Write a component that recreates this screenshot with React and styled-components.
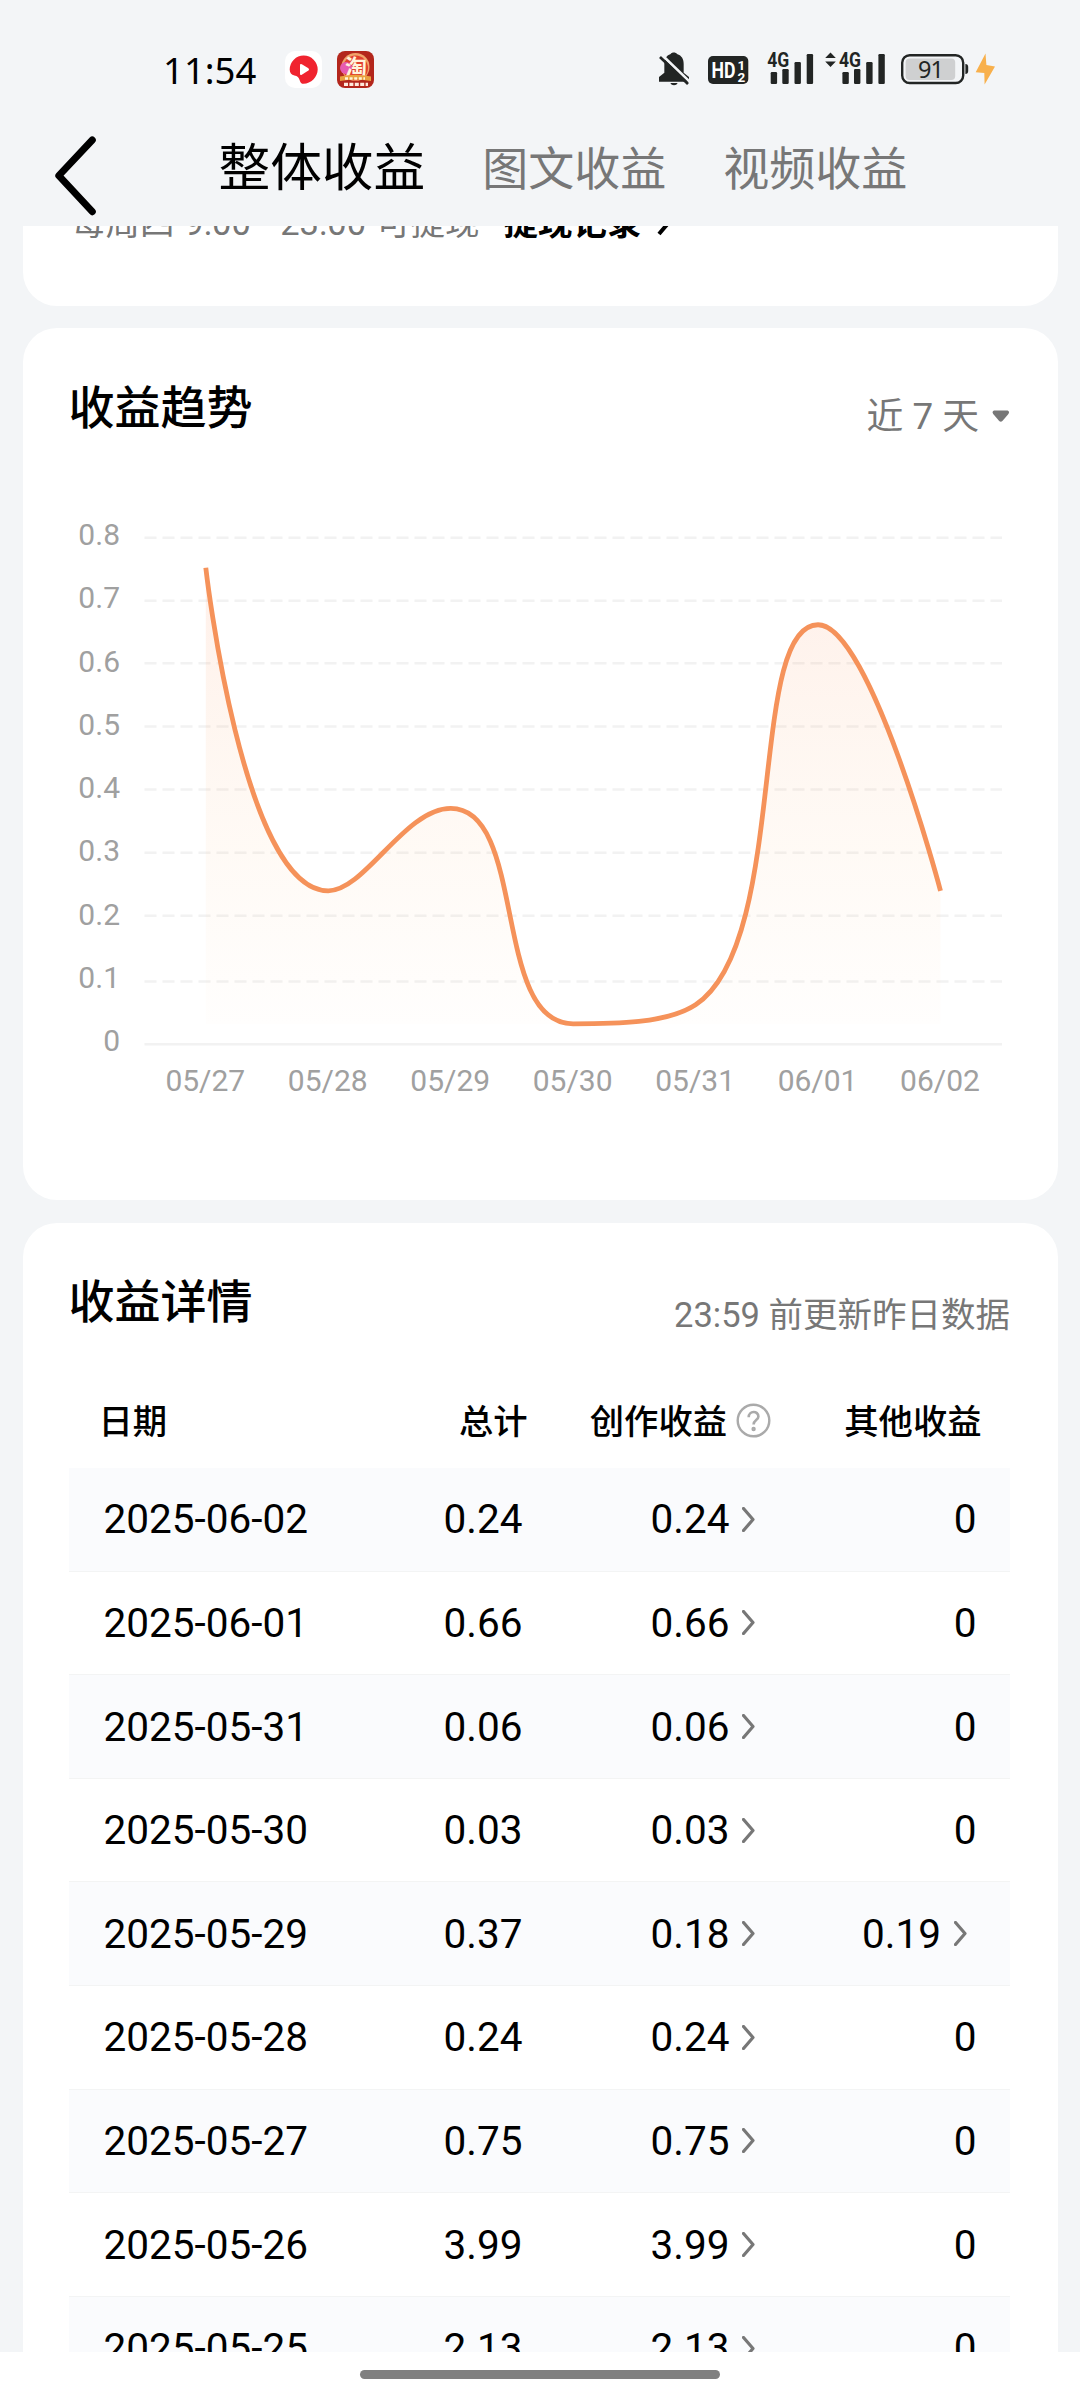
import React from "react";
import styled, { createGlobalStyle } from "styled-components";

const GlobalStyle = createGlobalStyle`
    * {
        box-sizing: border-box;
    }

    body {
        margin: 0;
        background-color: #f3f5f7;
        font-family: Roboto, "Noto Sans CJK SC", sans-serif;
        color: #000;
    }
`;

const Screen = styled.div`
    display: flex;
    flex-direction: column;
    width: 1080px;
    height: 2400px;
    overflow: hidden;
    background-color: #f3f5f7;
`;

//Status bar
const StatusBar = styled.div`
    display: flex;
    justify-content: space-between;
    align-items: center;
    flex: none;
    height: 138px;
    padding: 0 84px 0 163px;
`;

const StatusLeft = styled.div`
    display: flex;
    align-items: center;
`;

const Clock = styled.span`
    width: 122px;
    padding-top: 1px;
    font-family: "Noto Sans", "Open Sans", sans-serif;
    font-size: 36.5px;
    font-weight: 400;
    line-height: 40px;
`;

const AppIcon = styled.svg`
    width: 37px;
    height: 37px;
    margin-right: 15px;
`;

const StatusIcons = styled.svg`
    width: 340px;
    height: 40px;
    overflow: visible;
`;

//Navigation
const NavBar = styled.nav`
    display: flex;
    align-items: center;
    flex: none;
    height: 88px;
    padding-left: 50px;
`;

const BackButton = styled.button`
    display: flex;
    width: 168.5px;
    padding: 0;
    margin-bottom: 13px;
    border: none;
    background: none;
`;

const Tabs = styled.div`
    display: flex;
    align-items: center;
    gap: 57px;
    height: 60px;
    margin-bottom: 27px;
`;

const Tab = styled.span`
    font-size: ${(props) => (props.$active ? "51.7px" : "46px")};
    line-height: 60px;
    color: ${(props) => (props.$active ? "#000" : "#777")};
    white-space: nowrap;
`;

//Cards
const Content = styled.main`
    display: flex;
    flex-direction: column;
    gap: 22.5px;
    flex: 1;
    min-height: 0;
    padding: 0 22.5px;
    overflow: hidden;
`;

const Card = styled.section`
    flex: none;
    height: ${(props) => props.$height};
    padding: 49.5px 47.5px 0 46px;
    border-radius: 34px;
    background-color: #fff;
`;

const WithdrawCard = styled(Card)`
    display: flex;
    align-items: flex-end;
    margin-top: -60px;
    padding-bottom: 60px;
`;

const WithdrawHint = styled.span`
    padding-left: 2.5px;
    font-size: 34.5px;
    line-height: 46px;
    color: #777;
    white-space: pre;
    word-spacing: 1.3px;
`;

const WithdrawLink = styled.a`
    display: flex;
    align-items: center;
    gap: 16px;
    margin-left: 24px;
    font-size: 34.5px;
    font-weight: 600;
    line-height: 46px;
`;

const CardHeader = styled.div`
    display: flex;
    justify-content: space-between;
    align-items: flex-end;
    height: 61.5px;
`;

const Title = styled.h2`
    margin: 0;
    align-self: flex-start;
    font-size: 46px;
    font-weight: 500;
    line-height: 60px;
`;

const Range = styled.button`
    display: flex;
    align-items: center;
    gap: 13px;
    padding: 0;
    border: none;
    background: none;
    font-family: inherit;
    font-size: 36.8px;
    line-height: 45px;
    color: #777;
`;

const UpdateHint = styled.span`
    font-size: 34.5px;
    line-height: 38px;
    color: #777;
`;

const Chart = styled.svg`
    display: block;
    width: 943px;
    height: 700px;
    font-size: 30px;
    fill: #a0a0a0;
`;

//Table
const Row = styled.div`
    display: grid;
    grid-template-columns: 230px 200px 242.5px 211.5px;
    align-items: center;
    height: 103.6px;
    padding-left: 30px;
    border-bottom: 1.5px solid #f3f4f4;
    background-color: ${(props) => (props.$striped ? "#fafbfd" : "#fff")};
`;

const HeadRow = styled(Row)`
    height: 92px;
    margin-top: 42.6px;
    border-bottom: none;
    background-color: transparent;
`;

const HeadCell = styled.div`
    display: flex;
    justify-content: ${(props) => (props.$left ? "flex-start" : "flex-end")};
    align-items: center;
    gap: 9px;
    padding-right: ${(props) => (props.$help ? "0" : "1px")};
    font-size: 34.3px;
    font-weight: 500;
    line-height: 46px;
`;

const HelpIcon = styled.svg`
    width: 35px;
    height: 35px;
    margin-bottom: 3px;
`;

const Cell = styled.div`
    display: flex;
    align-items: center;
    justify-content: ${(props) => (props.$left ? "flex-start" : "flex-end")};
    padding-left: ${(props) => (props.$left ? "5px" : "0")};
    padding-right: ${(props) => (props.$link ? "16px" : "6px")};
    gap: 12.5px;
    font-size: 40.5px;
    line-height: 48px;
`;

const HomeBar = styled.footer`
    display: flex;
    justify-content: center;
    flex: none;
    height: 48px;
    padding-top: 18px;
    background-color: #fff;
`;

const HomeHandle = styled.div`
    width: 360px;
    height: 9px;
    border-radius: 5px;
    background-color: #808080;
`;

const points = [
    { day: "05/27", value: 0.75 },
    { day: "05/28", value: 0.24 },
    { day: "05/29", value: 0.37 },
    { day: "05/30", value: 0.03 },
    { day: "05/31", value: 0.06 },
    { day: "06/01", value: 0.66 },
    { day: "06/02", value: 0.24 },
];

const rows = [
    { date: "2025-06-02", total: "0.24", creation: "0.24", other: "0" },
    { date: "2025-06-01", total: "0.66", creation: "0.66", other: "0" },
    { date: "2025-05-31", total: "0.06", creation: "0.06", other: "0" },
    { date: "2025-05-30", total: "0.03", creation: "0.03", other: "0" },
    { date: "2025-05-29", total: "0.37", creation: "0.18", other: "0.19" },
    { date: "2025-05-28", total: "0.24", creation: "0.24", other: "0" },
    { date: "2025-05-27", total: "0.75", creation: "0.75", other: "0" },
    { date: "2025-05-26", total: "3.99", creation: "3.99", other: "0" },
    { date: "2025-05-25", total: "2.13", creation: "2.13", other: "0" },
];

const ticks = ["0", "0.1", "0.2", "0.3", "0.4", "0.5", "0.6", "0.7", "0.8"];
const gridY = [605.3, 542.5, 476.7, 413.7, 350.5, 287.5, 224.3, 161.7, 98.7];

const toX = (i) => 136.8 + i * 122.45;
const toY = (value) => 603.8 - value * 633.4;

const clamp = (v, a, b) => Math.max(Math.min(v, Math.max(a, b)), Math.min(a, b));

//Smooth line: control points never leave the box between two neighbours
const smoothPath = (pts, smooth = 0.5) => {
    let d = `M${pts[0].x} ${pts[0].y}`;
    let out = pts[0];

    for (let i = 1; i < pts.length; i++) {
        const prev = pts[i - 1];
        const cur = pts[i];
        const next = pts[i + 1];
        let inn = cur;
        let nextOut = cur;

        if (next) {
            const lenPrev = Math.hypot(cur.x - prev.x, cur.y - prev.y);
            const lenNext = Math.hypot(next.x - cur.x, next.y - cur.y);
            const ratio = lenNext / (lenNext + lenPrev);
            const ox = clamp(cur.x + (next.x - prev.x) * smooth * ratio, next.x, cur.x);
            const oy = clamp(cur.y + (next.y - prev.y) * smooth * ratio, next.y, cur.y);
            inn = {
                x: clamp(cur.x - ((ox - cur.x) * lenPrev) / lenNext, prev.x, cur.x),
                y: clamp(cur.y - ((oy - cur.y) * lenPrev) / lenNext, prev.y, cur.y),
            };
            nextOut = {
                x: cur.x + ((cur.x - inn.x) * lenNext) / lenPrev,
                y: cur.y + ((cur.y - inn.y) * lenNext) / lenPrev,
            };
        }

        d += ` C${out.x} ${out.y} ${inn.x} ${inn.y} ${cur.x} ${cur.y}`;
        out = nextOut;
    }

    return d;
};

const TrendChart = () => {
    const line = smoothPath(points.map((p, i) => ({ x: toX(i), y: toY(p.value) })));

    return (
        <Chart viewBox="0 0 943 700">
            <defs>
                <linearGradient id="area" gradientUnits="userSpaceOnUse" x1="0" y1="128" x2="0" y2="590">
                    <stop offset="0" stopColor="#fb7f4b" stopOpacity="0.12" />
                    <stop offset="0.6" stopColor="#fba04b" stopOpacity="0.055" />
                    <stop offset="1" stopColor="#fba04b" stopOpacity="0.01" />
                </linearGradient>
            </defs>
            {ticks.map((tick, i) => (
                <g key={tick}>
                    <text x="51" y={612.3 - i * 63.3} textAnchor="end">{tick}</text>
                    <path
                        d={`M75.5 ${gridY[i]}H933`}
                        stroke="#f2f2f2"
                        strokeWidth="2.4"
                        strokeDasharray={i === 0 ? "none" : "12 6"}
                    />
                </g>
            ))}
            <path d={`${line}V585H${toX(0)}Z`} fill="url(#area)" />
            <path d={line} fill="none" stroke="#f5925a" strokeWidth="4.8" />
            {points.map((p, i) => (
                <text key={p.day} x={toX(i) - 0.5} y="652" textAnchor="middle">{p.day}</text>
            ))}
        </Chart>
    );
};

const Chevron = () => (
    <svg width="13" height="25" viewBox="0 0 13 25" fill="none" stroke="#777" strokeWidth="3.2">
        <path d="M1.5 1.5L11 12.5L1.5 23.5" strokeLinecap="round" strokeLinejoin="round" />
    </svg>
);

const Signal = ({ x }) => (
    <g transform={`translate(${x} 0)`}>
        <text x="0" y="14.8" fontSize="20" fontWeight="700" textLength="22" lengthAdjust="spacingAndGlyphs">4G</text>
        <rect x="3.4" y="20" width="6.4" height="12" rx="1.2" />
        <rect x="15" y="17" width="6.4" height="15" rx="1.2" />
        <rect x="27.2" y="10" width="6.4" height="22" rx="1.2" />
        <rect x="39.4" y="2" width="6.4" height="30" rx="1.2" />
    </g>
);

const App = () => (
    <Screen>
        <GlobalStyle />
        <StatusBar>
            <StatusLeft>
                <Clock>11:54</Clock>
                <AppIcon viewBox="0 0 37 37">
                    <rect width="37" height="37" rx="10" fill="#fff" />
                    <path
                        d="M18.7 4.6A14 14 0 0 1 32.7 18.6C32.7 26 26 32.8 18.5 32.8C16.5 32.8 15.4 31.6 14.8 29.4C13.9 26.6 12.4 25.2 9.4 24.6C6.4 24 4.7 22 4.7 18.6A14 14 0 0 1 18.7 4.6Z"
                        fill="#f0232f"
                    />
                    <path d="M15 14.2Q15 12.4 16.8 13.2L23.4 17.2Q24.8 18.4 23.4 19.6L16.8 23.8Q15 24.6 15 22.8Z" fill="#fff" />
                </AppIcon>
                <AppIcon viewBox="0 0 37 37">
                    <rect width="37" height="37" rx="8" fill="#b3261c" />
                    <circle cx="18.5" cy="16" r="14" fill="#f0a36a" />
                    <circle cx="18.5" cy="17" r="12.5" fill="#e2402f" />
                    <circle cx="9" cy="17" r="6" fill="#e75bb0" />
                    <text x="8" y="23.5" fontSize="22" fontWeight="700" fill="#fff3dc">淘</text>
                    <path d="M3 25.5Q18.5 22 34 25.5V30Q18.5 27 3 30Z" fill="#e9a13f" />
                    <path d="M8 27.5H28" stroke="#fff6d8" strokeWidth="2.6" strokeDasharray="3 1.6" />
                    <path d="M7 33.4H31" stroke="#ffe9dd" strokeWidth="3.4" strokeDasharray="4 1.4" />
                </AppIcon>
            </StatusLeft>
            <StatusIcons viewBox="656 49 340 40" fill="#222524">
                <g transform="translate(659 52.3) scale(0.3333)">
                    <path d="M35 5C38 -1 51 -1 54 5C69 10 74 21 74 34V61L90 74V88H0V74L16 61V34C16 21 21 10 35 5Z" />
                    <path d="M34 92H56Q53 99 45 99T34 92Z" />
                    <path d="M9 8L95 91" stroke="#f3f5f7" strokeWidth="8" />
                    <path d="M3 14L87 95" stroke="#222524" strokeWidth="8" />
                </g>
                <rect x="708" y="56" width="40.3" height="28" rx="5" />
                <text x="711.5" y="78.2" fontSize="22" fontWeight="700" fill="#fff" textLength="24" lengthAdjust="spacingAndGlyphs">HD</text>
                <text x="737.5" y="69.5" fontSize="13.5" fontWeight="700" fill="#fff">1</text>
                <text x="737.5" y="81.5" fontSize="13.5" fontWeight="700" fill="#fff">2</text>
                <g transform="translate(0 52)">
                    <Signal x={767.3} />
                    <Signal x={839} />
                </g>
                <path d="M830.5 52.4L835.8 58H825.2ZM830.5 67L835.8 61.4H825.2Z" />
                <rect x="902.2" y="55.2" width="61" height="27.8" rx="7.5" fill="none" stroke="#222524" strokeWidth="2.4" />
                <rect x="905.6" y="58.4" width="49.6" height="21.6" rx="4" fill="#cfd0d1" />
                <path d="M965.4 64Q968.2 64 968.2 67V71Q968.2 74 965.4 74Z" />
                <text x="918" y="77.6" fontSize="23.5" textLength="26" fontFamily="Noto Sans">91</text>
                <path d="M985.5 53.5L975.7 72.2L984.3 73L984.6 84.5L995 66.4L986.4 65Z" fill="#f8b04c" />
            </StatusIcons>
        </StatusBar>
        <NavBar>
            <BackButton>
                <svg width="48" height="80" viewBox="0 0 48 80" fill="none" stroke="#000" strokeWidth="7">
                    <path d="M42.3 4L8.8 39.7L42.3 75.7" strokeLinecap="round" strokeLinejoin="round" />
                </svg>
            </BackButton>
            <Tabs>
                <Tab $active>整体收益</Tab>
                <Tab>图文收益</Tab>
                <Tab>视频收益</Tab>
            </Tabs>
        </NavBar>
        <Content>
            <WithdrawCard $height="139.5px">
                <WithdrawHint>每周四 9:00 - 23:00 可提现</WithdrawHint>
                <WithdrawLink>
                    提现记录
                    <svg width="15" height="31" viewBox="0 0 15 31" fill="none" stroke="#000" strokeWidth="4">
                        <path d="M2 1L13 14L2 27" />
                    </svg>
                </WithdrawLink>
            </WithdrawCard>
            <Card $height="872px">
                <CardHeader>
                    <Title>收益趋势</Title>
                    <Range>
                        近 7 天
                        <svg width="18" height="13" viewBox="0 0 18 13" fill="#777">
                            <path d="M2 0.5H15.6Q18 1.5 16.4 4L10.4 11Q8.8 12.6 7.2 11L1.2 4Q-0.4 1.5 2 0.5Z" />
                        </svg>
                    </Range>
                </CardHeader>
                <TrendChart />
            </Card>
            <Card $height="1300px">
                <CardHeader>
                    <Title>收益详情</Title>
                    <UpdateHint>23:59 前更新昨日数据</UpdateHint>
                </CardHeader>
                <HeadRow>
                    <HeadCell $left>日期</HeadCell>
                    <HeadCell>总计</HeadCell>
                    <HeadCell $help>
                        创作收益
                        <HelpIcon viewBox="0 0 35 35" fill="none" stroke="#aaa" strokeWidth="2.4">
                            <circle cx="17.5" cy="17.5" r="15.8" />
                            <path d="M12.7 14.2C12.7 7.4 22.4 7.6 22.4 13.4C22.4 17.2 17.6 17 17.6 21.6" strokeWidth="2.6" />
                            <circle cx="17.6" cy="26" r="1" />
                        </HelpIcon>
                    </HeadCell>
                    <HeadCell>其他收益</HeadCell>
                </HeadRow>
                {rows.map((item, i) => (
                    <Row key={item.date} $striped={i % 2 === 0}>
                        <Cell $left>{item.date}</Cell>
                        <Cell>{item.total}</Cell>
                        <Cell $link>
                            {item.creation}
                            <Chevron />
                        </Cell>
                        <Cell $link={item.other !== "0"}>
                            {item.other}
                            {item.other !== "0" && <Chevron />}
                        </Cell>
                    </Row>
                ))}
            </Card>
        </Content>
        <HomeBar>
            <HomeHandle />
        </HomeBar>
    </Screen>
);

export default App;
